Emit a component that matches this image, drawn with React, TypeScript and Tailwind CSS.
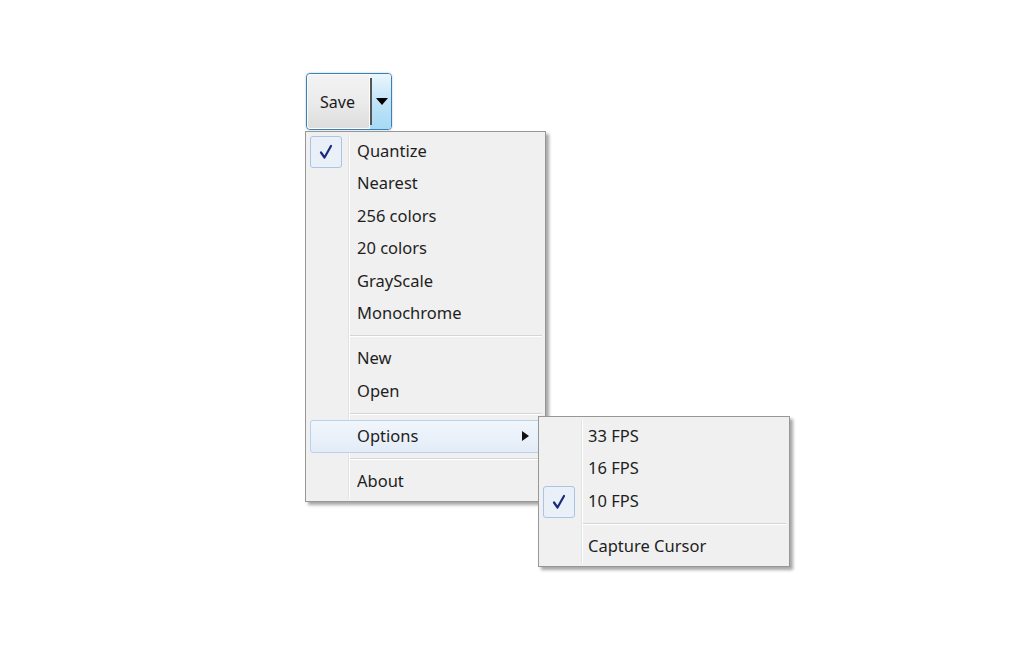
import React from "react";

const font = { fontFamily: '"Noto Sans", "Open Sans", sans-serif' };

function Check() {
  return (
    <div className="absolute left-[4px] top-[1px] w-[32px] h-[32px] rounded-[3px] border border-[#a9c4e4] bg-[#e9f0f8] flex items-center justify-center">
      <svg width="14" height="16" viewBox="0 0 14 16">
        <path d="M2 8.5 L5.5 13.5 L12 2" fill="none" stroke="#1b2a80" strokeWidth="2.2" strokeLinejoin="round" strokeLinecap="round" />
      </svg>
    </div>
  );
}

function Item({ label, checked, highlight, arrow, sub }: { label: string; checked?: boolean; highlight?: boolean; arrow?: boolean; sub?: boolean }) {
  return (
    <div className="relative h-[32.5px] flex items-center">
      {highlight && (
        <div className="absolute left-[4px] right-[4px] top-0 bottom-0 rounded-[3px] border border-[#b8d2ec] bg-gradient-to-b from-[#f1f6fc] to-[#e3ecf7]" />
      )}
      {checked && <Check />}
      <span className={"relative text-[16.5px] text-[#1e1e1e] " + (sub ? "pl-[49px]" : "pl-[51px]")}>{label}</span>
      {arrow && (
        <svg className="absolute right-[16px]" width="7" height="10" viewBox="0 0 7 10">
          <path d="M0 0 L7 5 L0 10 Z" fill="#111" />
        </svg>
      )}
    </div>
  );
}

function Sep() {
  return (
    <div className="h-[12.5px] flex flex-col justify-center pl-[44px] pr-[3px]">
      <div className="h-px bg-[#d5d5d5]" />
      <div className="h-px bg-white" />
    </div>
  );
}

function Menu({ children, className }: { children: React.ReactNode; className: string }) {
  return (
    <div className={"absolute bg-[#f0f0f0] border border-[#979797] py-[3px] shadow-[3px_3px_3px_rgba(0,0,0,0.35)] " + className}>
      <div className="absolute left-[42px] top-[3px] bottom-[3px] w-[2px] flex">
        <div className="w-px bg-[#e2e3e3]" />
        <div className="w-px bg-white" />
      </div>
      <div className="relative">{children}</div>
    </div>
  );
}

export default function App() {
  return (
    <div className="w-[1024px] h-[655px] bg-white relative" style={font}>
      <div className="pt-[73px] pl-[306px]">
        <div className="flex w-[86px] h-[57px] rounded-[4px] border border-[#3c7fb1] shadow-[0_0_2px_rgba(60,127,177,0.5)] overflow-hidden">
          <div className="w-[63px] flex items-center justify-center pr-[2px] bg-gradient-to-b from-[#f3f3f3] via-[#ebebeb] to-[#dddddd] border border-[#fcfcfc] rounded-l-[3px] text-[16px] text-[#1a1a1a]">
            Save
          </div>
          <div className="flex items-stretch py-[4px] bg-gradient-to-b from-[#eaf6fd] via-[#c1e4f9] to-[#a7d9f5]">
            <div className="w-[2px] bg-[#555]" />
          </div>
          <div className="flex-1 flex items-center justify-center bg-gradient-to-b from-[#eaf6fd] via-[#c1e4f9] to-[#a7d9f5]">
            <svg width="12" height="7" viewBox="0 0 12 7">
              <path d="M0 0 L12 0 L6 7 Z" fill="#000" />
            </svg>
          </div>
        </div>
      </div>

      <Menu className="left-[305px] top-[131px] w-[241px]">
        <Item label="Quantize" checked />
        <Item label="Nearest" />
        <Item label="256 colors" />
        <Item label="20 colors" />
        <Item label="GrayScale" />
        <Item label="Monochrome" />
        <Sep />
        <Item label="New" />
        <Item label="Open" />
        <Sep />
        <Item label="Options" highlight arrow />
        <Sep />
        <Item label="About" />
      </Menu>

      <Menu className="left-[538px] top-[416px] w-[252px]">
        <Item sub label="33 FPS" />
        <Item sub label="16 FPS" />
        <Item sub label="10 FPS" checked />
        <Sep />
        <Item sub label="Capture Cursor" />
      </Menu>
    </div>
  );
}
